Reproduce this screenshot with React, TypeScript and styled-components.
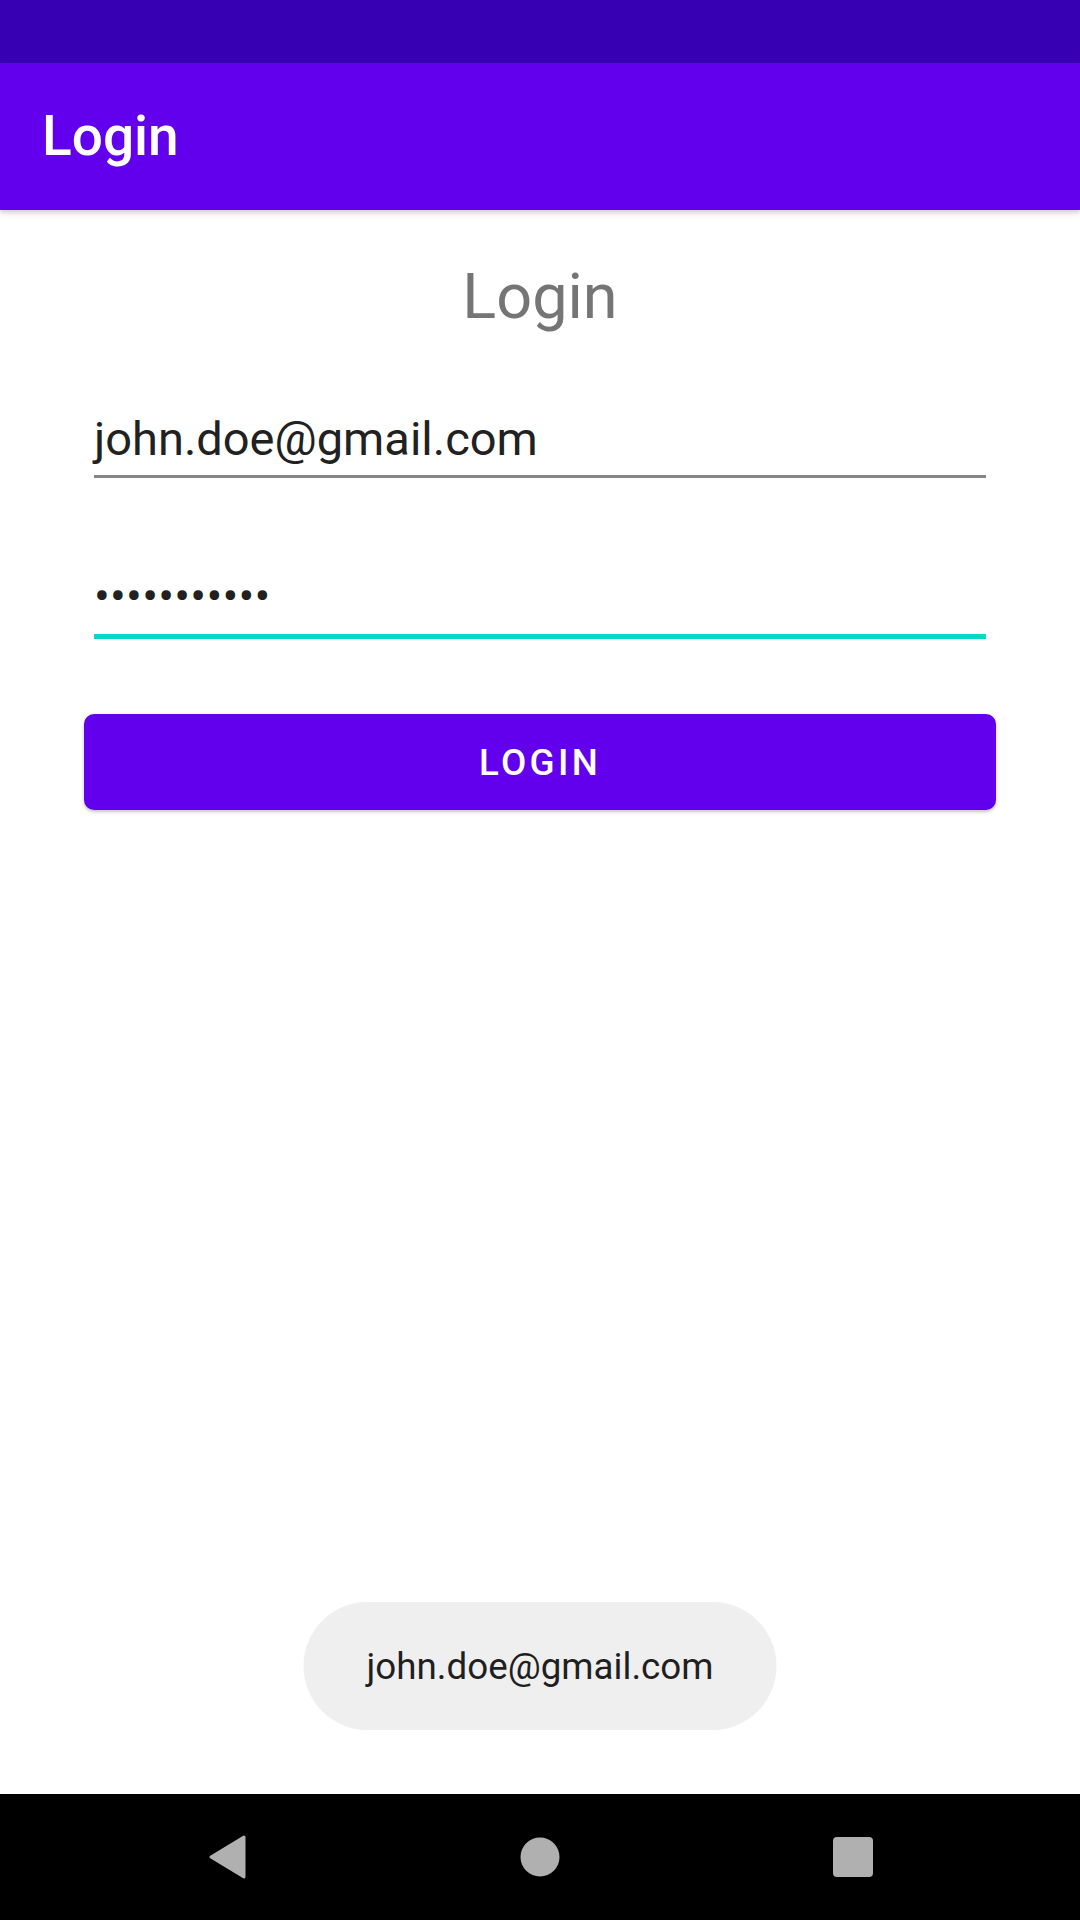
import React from "react";
import styled, { createGlobalStyle } from "styled-components";

const GlobalStyle = createGlobalStyle`
  html,
  body {
    margin: 0;
    padding: 0;
    background: #ffffff;
  }

  body {
    font-family: Roboto, "Noto Sans", "Liberation Sans", sans-serif;
  }
`;

const Screen = styled.div`
  position: relative;
  display: flex;
  flex-direction: column;

  width: 1080px;
  height: 1920px;

  overflow: hidden;
  background: #ffffff;
`;

const StatusBar = styled.div`
  height: 63px;
  flex-shrink: 0;

  background: #3700b3;
`;

const AppBar = styled.header`
  position: relative;
  z-index: 1;
  display: flex;
  align-items: center;

  height: 147px;
  flex-shrink: 0;
  padding-left: 42px;

  background: #6200ee;
  box-shadow:
    0 2px 4px rgba(0, 0, 0, 0.14),
    0 4px 8px rgba(0, 0, 0, 0.08);
`;

const AppTitle = styled.h1`
  margin: 0;

  color: #ffffff;
  font-size: 55px;
  font-weight: 500;
  line-height: 1;
`;

const Content = styled.main`
  position: relative;
  display: flex;
  flex: 1;
  flex-direction: column;

  padding: 0 84px;
`;

const Heading = styled.h2`
  margin: 50px 0 0;

  color: #757575;
  font-size: 63px;
  font-weight: 400;
  line-height: 74px;
  text-align: center;
`;

const Field = styled.div<{ $focused?: boolean; $top: number }>`
  margin: ${(p) => p.$top}px 10px 0;
  padding-bottom: ${(p) => (p.$focused ? 11 : 9)}px;

  color: #212121;
  font-size: 47px;
  line-height: 55px;
  white-space: nowrap;

  border-bottom: ${(p) => (p.$focused ? "5px solid #03dac5" : "3px solid #858585")};
`;

const Dots = styled.span`
  letter-spacing: 0.2px;
`;

const LoginButton = styled.button`
  display: flex;
  align-items: center;
  justify-content: center;

  height: 96px;
  margin-top: 75px;
  padding: 0;

  color: #ffffff;
  font-family: inherit;
  font-size: 36.75px;
  font-weight: 500;
  letter-spacing: 3.3px;
  text-transform: uppercase;

  background: #6200ee;
  border: none;
  border-radius: 10px;
  box-shadow:
    0 2px 3px rgba(0, 0, 0, 0.18),
    0 1px 6px rgba(0, 0, 0, 0.08);
`;

const Toast = styled.div`
  position: absolute;
  bottom: 64px;
  left: 50%;
  transform: translateX(-50%);

  display: flex;
  align-items: center;

  height: 128px;
  padding: 0 63px;

  color: #1f1f1f;
  font-size: 36.75px;
  white-space: nowrap;

  background: #efefef;
  border-radius: 64px;
`;

const NavBar = styled.nav`
  display: flex;
  align-items: center;
  justify-content: center;
  gap: 273px;

  height: 126px;
  flex-shrink: 0;

  background: #000000;
`;

const NavIcon = styled.svg`
  display: block;
  width: 40px;
  height: 44px;
`;

const NAV_GREY = "#b0b0b0";

export default function App() {
  return (
    <>
      <GlobalStyle />
      <Screen>
        <StatusBar />
        <AppBar>
          <AppTitle>Login</AppTitle>
        </AppBar>
        <Content>
          <Heading>Login</Heading>
          <Field $top={77}>john.doe@gmail.com</Field>
          <Field $top={90} $focused>
            <Dots>•••••••••••</Dots>
          </Field>
          <LoginButton>Login</LoginButton>
          <Toast>john.doe@gmail.com</Toast>
        </Content>
        <NavBar>
          <NavIcon viewBox="0 0 40 44">
            <path
              d="M37 2 L4 22 L37 42 Z"
              fill={NAV_GREY}
              stroke={NAV_GREY}
              strokeWidth="3"
              strokeLinejoin="round"
            />
          </NavIcon>
          <NavIcon viewBox="0 0 40 44">
            <circle cx="20" cy="22" r="19.5" fill={NAV_GREY} />
          </NavIcon>
          <NavIcon viewBox="0 0 40 44">
            <rect x="0" y="2" width="40" height="40" rx="4" fill={NAV_GREY} />
          </NavIcon>
        </NavBar>
      </Screen>
    </>
  );
}
